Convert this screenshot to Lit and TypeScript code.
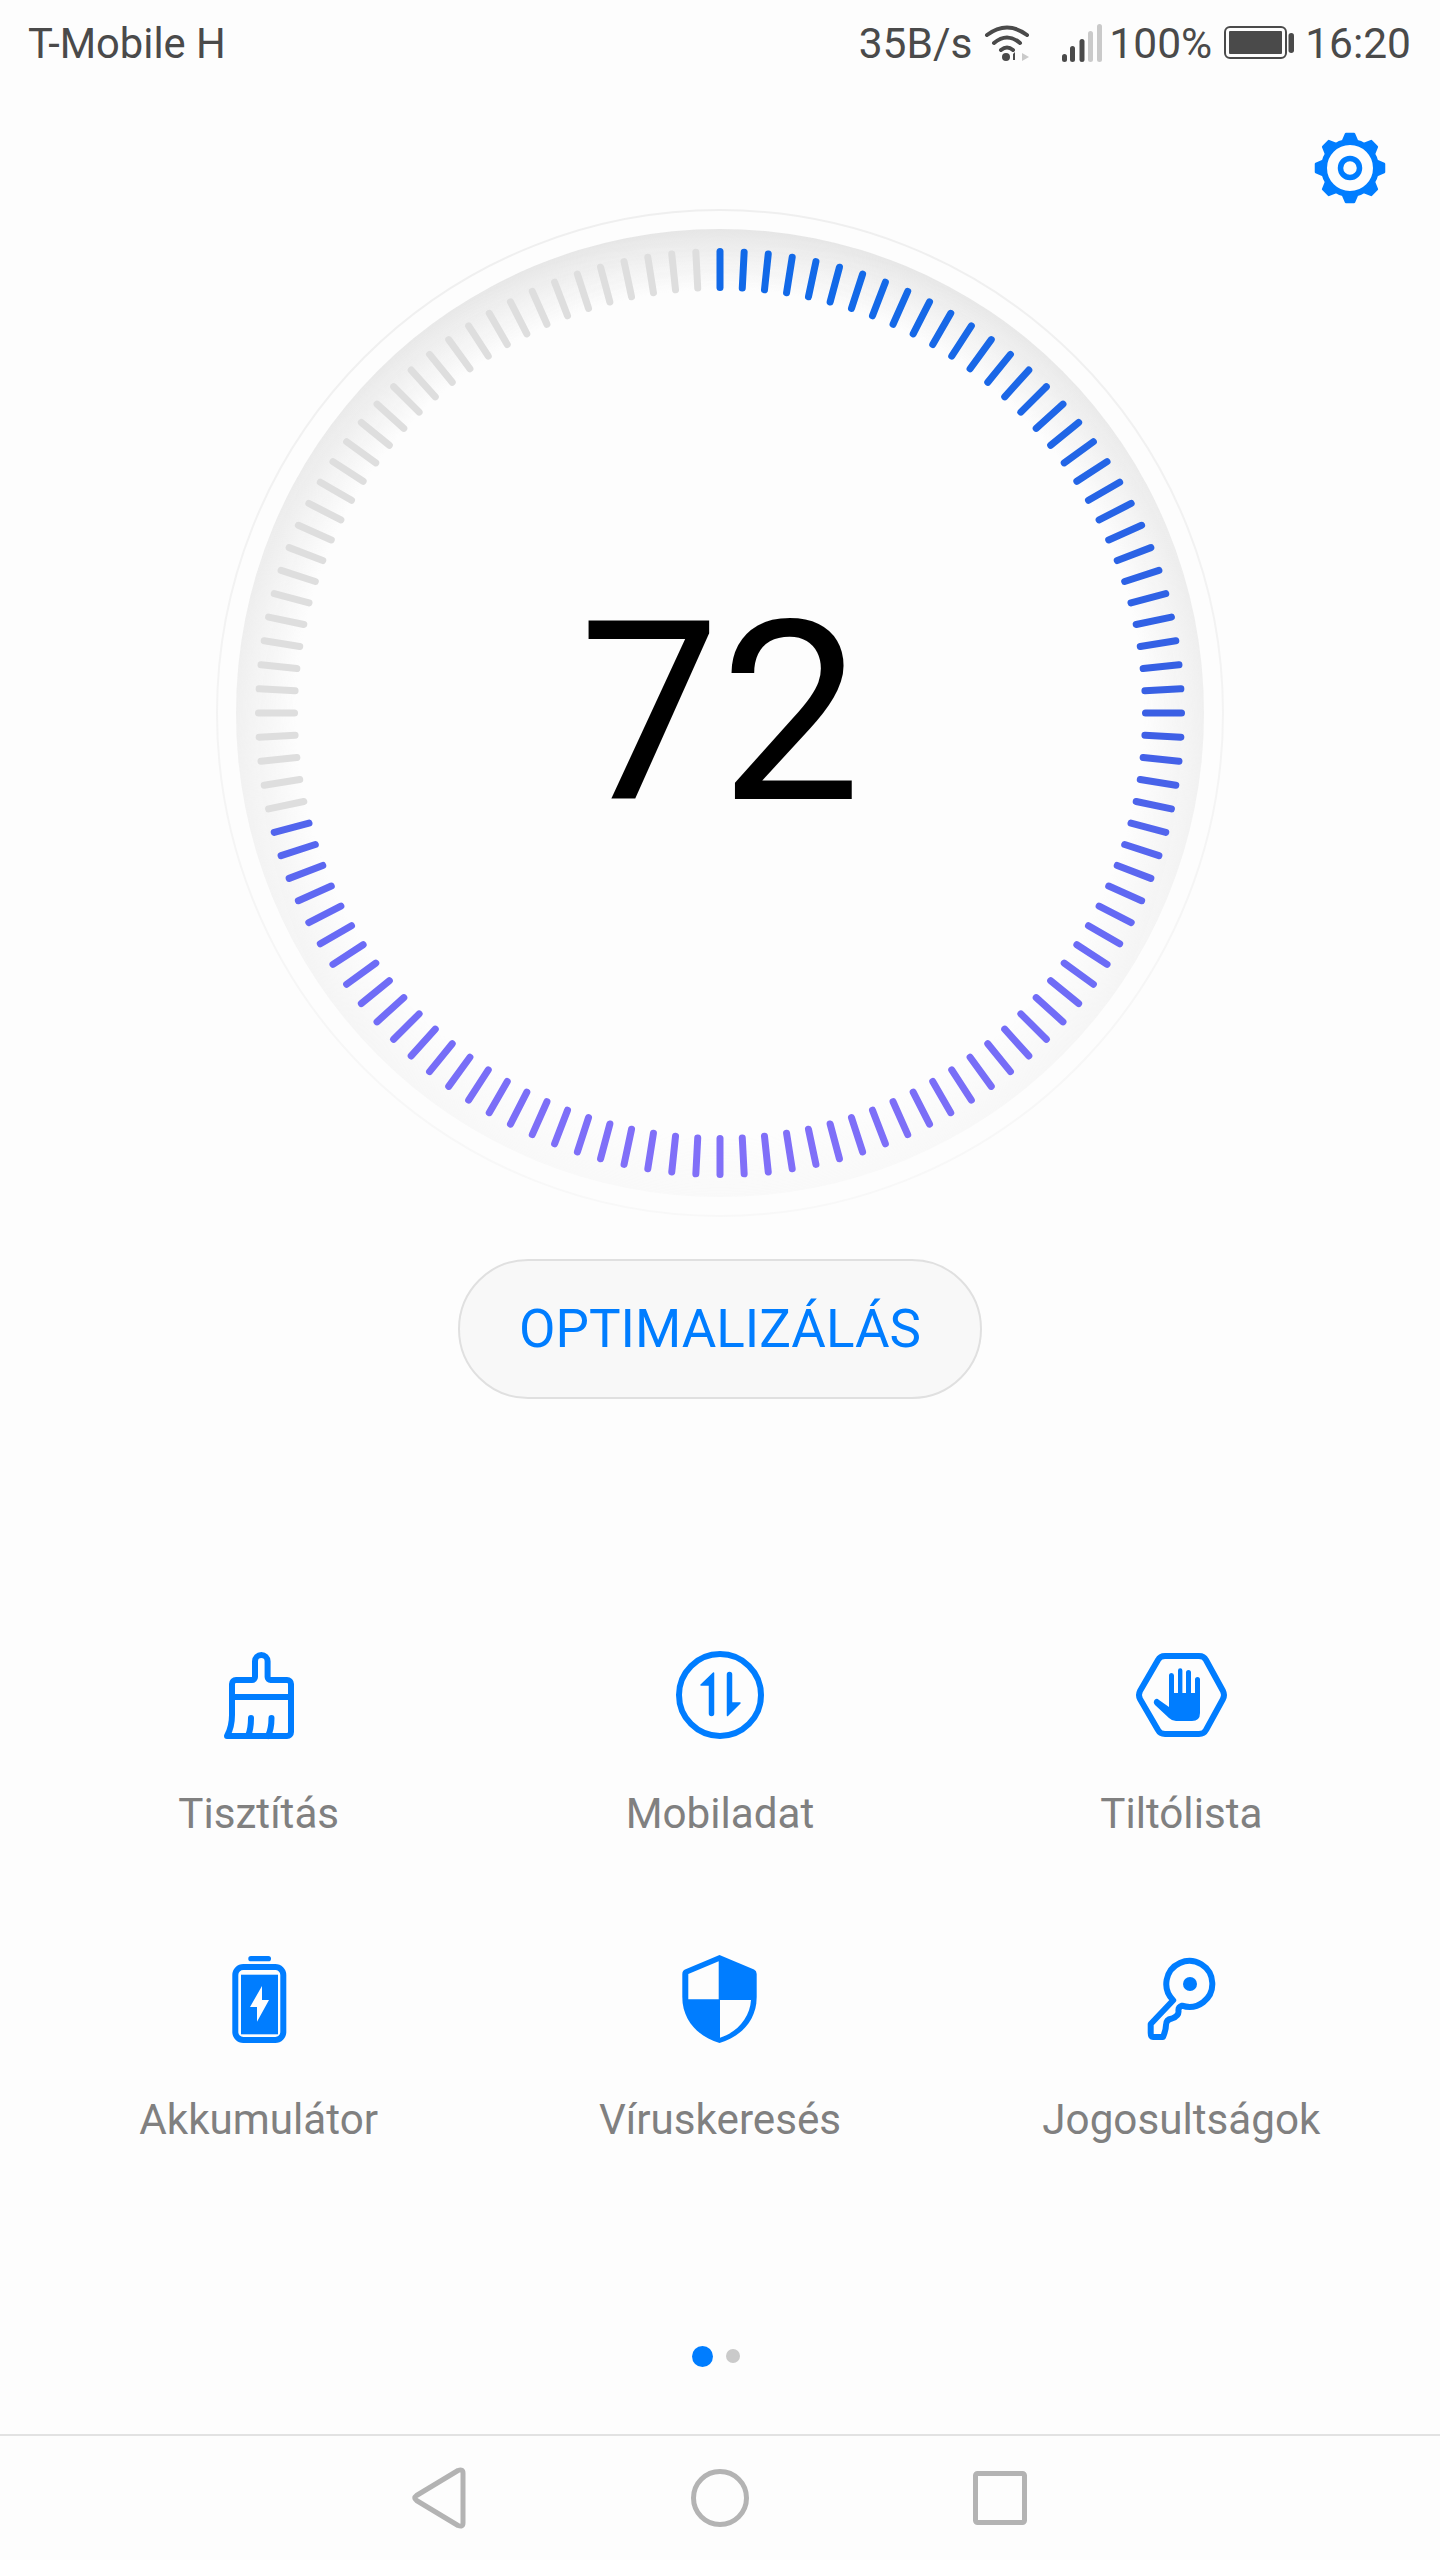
import { LitElement, css, html, svg } from 'lit';
import { customElement } from 'lit/decorators.js';

const TICKS = 120;
const SCORE = 72;

// vertical colour ramp of the score ticks
const RAMP: [number, number[]][] = [
  [0, [15, 106, 232]],
  [0.5, [58, 95, 228]],
  [0.75, [106, 107, 246]],
  [1, [131, 112, 248]],
];

function tickColor(t: number) {
  for (let i = 1; i < RAMP.length; i++) {
    const [p0, c0] = RAMP[i - 1];
    const [p1, c1] = RAMP[i];
    if (t <= p1) {
      const k = (t - p0) / (p1 - p0);
      return `rgb(${c0.map((v, j) => Math.round(v + (c1[j] - v) * k)).join(',')})`;
    }
  }
  return '#8370f8';
}

const ICONS = {
  brush: svg`<path class="line" d="M21 50V37a4 4 0 0 1 4-4H41a3 3 0 0 0 3-3V14.3a6.3 6.3 0 0 1 12.6 0V30a3 3 0 0 0 3 3H76a4 4 0 0 1 4 4V85a4 4 0 0 1-4 4H16Q21 80 21 68V50H80M40 71Q40 82 37 89M60.5 71Q60.5 82 57 89"/>`,
  data: svg`<circle class="line" cx="48" cy="48" r="41"/><path class="soft" d="M41.500 26V66.500a2 2 0 0 1-4 0V38H29ZM55.500 27.500a2 2 0 0 1 4 0V56H68L55.500 68.500Z"/>`,
  block: svg`<path class="line" d="M7 44 25 13Q27 9 32 9H66Q71 9 73 13L90 44Q92 48 90 52L73 83Q71 87 66 87H32Q27 87 25 83L7 52Q5 48 7 44Z"/><path class="solid" d="M36 28.500a2.500 2.500 0 0 1 5 0V46H45V23.500a2.200 2.200 0 0 1 4.400 0V46H53V25.500a2.500 2.500 0 0 1 5 0V46H62V32.500a2.500 2.500 0 0 1 5 0V66Q67 74 59 74H43Q39 74 36 71L22 58Q19.500 55 22 52.500Q24 51 26 53L36 60Z"/>`,
  battery: svg`<rect class="solid" x="37.300" y="3" width="22.700" height="5.300" rx="2.600"/><rect class="line" x="24.300" y="14" width="48" height="73" rx="8"/><rect class="solid" x="30" y="21.700" width="37" height="59.600"/><path class="cut" d="M51 33 39 54H46V68.700L58 47H51Z"/>`,
  shield: svg`<path class="solid" d="M47.500 2 82 16.500Q84.700 17.700 84.700 21V44C84.700 68 68 84 47.500 90 27 84 10.300 68 10.300 44V21Q10.300 17.700 13 16.500Z"/><path class="cut" d="M16.300 21 46.700 8.300V46.300H16.300ZM48 47H79C78 64 66 79 48 84.700Z"/>`,
  key: svg`<path class="line" d="M40.200 47.300A23 23 0 1 1 49 52.700Q45 54 45.500 58Q46 63 39 65.500Q33 66.500 33 72Q33 77 30 84H20Q17.700 84 17.700 80V71Z"/><circle class="solid" cx="57" cy="31" r="7"/>`,
};

const TOOLS = [
  { icon: ICONS.brush, label: 'Tisztítás' },
  { icon: ICONS.data, label: 'Mobiladat' },
  { icon: ICONS.block, label: 'Tiltólista' },
  { icon: ICONS.battery, label: 'Akkumulátor' },
  { icon: ICONS.shield, label: 'Víruskeresés' },
  { icon: ICONS.key, label: 'Jogosultságok' },
];

// signal strength bars: x, height, colour
const BARS: [number, number, string][] = [
  [0, 8, '#4a4a4a'],
  [8, 16, '#4a4a4a'],
  [17.5, 23, '#4a4a4a'],
  [26, 31, '#cacaca'],
  [35, 38, '#cacaca'],
];

@customElement('app-root')
export class AppRoot extends LitElement {
  static styles = css`
    :host {
      display: flex;
      flex-direction: column;
      width: 1440px;
      height: 2560px;
      background: #fdfdfd;
      font-family: Roboto, "Liberation Sans", sans-serif;
      overflow: hidden;
    }

    svg { display: block; }

    .status {
      height: 84px;
      box-sizing: border-box;
      padding: 2px 29px 0 28px;
      display: flex;
      align-items: center;
      color: #4a4a4a;
      font-size: 42.500px;
    }
    .carrier { margin-right: auto; font-size: 41.700px; }
    .speed { margin-right: 12px; }
    .wifi { margin-right: 32px; }
    .bars { margin-right: 6px; }
    .percent { margin-right: 12px; }
    .cell { margin-right: 11px; }

    .toolbar {
      height: 124px;
      padding: 44px 50px 0 0;
      box-sizing: border-box;
      display: flex;
      justify-content: flex-end;
    }

    .gauge {
      position: relative;
      width: 1010px;
      height: 1010px;
      align-self: center;
    }
    .score {
      position: absolute;
      inset: 0;
      display: flex;
      align-items: center;
      justify-content: center;
      font-size: 251px;
      font-weight: 400;
      color: #000;
    }

    .optimize {
      align-self: center;
      margin-top: 41px;
      width: 524px;
      height: 140px;
      box-sizing: border-box;
      border: 2px solid #e0e0e0;
      border-radius: 70px;
      background: #f8f8f8;
      color: #007dff;
      font: inherit;
      font-size: 53px;
      padding: 0;
    }

    .tools {
      margin: 248px 28px 0;
      display: grid;
      grid-template-columns: repeat(3, 1fr);
      row-gap: 115px;
    }
    .tool {
      display: flex;
      flex-direction: column;
      align-items: center;
      gap: 47px;
      color: #808080;
      font-size: 42.200px;
      line-height: 48px;
    }
    .icon { width: 96px; height: 96px; }
    .line { fill: none; stroke: #007dff; stroke-width: 6; stroke-linecap: round; stroke-linejoin: round; }
    .solid { fill: #007dff; }
    .soft { fill: #007dff; stroke: #007dff; stroke-width: 1.500; stroke-linejoin: round; }
    .cut { fill: #fdfdfd; }

    .dots {
      margin-top: 201px;
      height: 22px;
      display: flex;
      align-items: center;
      justify-content: center;
      gap: 13px;
      padding-right: 8px;
    }
    .dot { width: 21px; height: 21px; border-radius: 50%; background: #007dff; }
    .dot.off { width: 14px; height: 14px; background: #cacaca; }

    .nav {
      margin-top: auto;
      height: 126px;
      box-sizing: border-box;
      border-top: 2px solid #e2e2e2;
      display: flex;
      align-items: center;
      justify-content: center;
      gap: 200px;
    }
    .nav path, .nav circle, .nav rect { fill: none; stroke: #b3b3b3; stroke-width: 5; stroke-linejoin: round; }
  `;

  private renderGauge() {
    const filled = Math.round((SCORE / 100) * TICKS);
    const ticks = [];
    for (let i = 0; i < TICKS; i++) {
      const a = (i / TICKS) * Math.PI * 2;
      const s = Math.sin(a);
      const c = -Math.cos(a);
      const color = i < filled ? tickColor((c * 443 + 465) / 930) : '#dedede';
      ticks.push(svg`<line x1=${s * 425.5} y1=${c * 425.5} x2=${s * 461.5} y2=${c * 461.5}
        stroke=${color} stroke-width="7" stroke-linecap="round"/>`);
    }
    return html`
      <svg width="1010" height="1010" viewBox="-505 -505 1010 1010">
        <defs>
          <radialGradient id="band" gradientUnits="userSpaceOnUse" cx="0" cy="0" r="484">
            <stop offset="0.875" stop-color="#e6e6e6" stop-opacity="0"/>
            <stop offset="1" stop-color="#e6e6e6"/>
          </radialGradient>
          <linearGradient id="fade" gradientUnits="userSpaceOnUse" x1="0" y1="-484" x2="0" y2="484">
            <stop offset="0" stop-color="#fff"/>
            <stop offset="0.45" stop-color="#fff" stop-opacity="0.6"/>
            <stop offset="1" stop-color="#fff" stop-opacity="0.15"/>
          </linearGradient>
          <linearGradient id="rim" gradientUnits="userSpaceOnUse" x1="0" y1="-503" x2="0" y2="503">
            <stop offset="0" stop-color="#efefef"/>
            <stop offset="1" stop-color="#f8f8f8"/>
          </linearGradient>
          <mask id="bandMask" maskUnits="userSpaceOnUse" x="-505" y="-505" width="1010" height="1010">
            <rect x="-505" y="-505" width="1010" height="1010" fill="url(#fade)"/>
          </mask>
        </defs>
        <circle r="503" fill="none" stroke="url(#rim)" stroke-width="2"/>
        <circle r="484" fill="url(#band)" mask="url(#bandMask)"/>
        ${ticks}
      </svg>
    `;
  }

  render() {
    return html`
      <div class="status">
        <span class="carrier">T-Mobile H</span>
        <span class="speed">35B/s</span>
        <svg class="wifi" width="46" height="38" viewBox="0 0 46 38">
          <path d="M3 11Q23 -4 43 11M10 19Q23 8 36 19M17 26Q23 21 29 26" fill="none" stroke="#4a4a4a" stroke-width="4" stroke-linecap="round"/>
          <circle cx="22" cy="33" r="4" fill="#4a4a4a"/>
          <path d="M31 28V36H29V30Z" fill="#4a4a4a"/>
          <path d="M38 29 45 33 38 37Z" fill="#cacaca"/>
        </svg>
        <svg class="bars" width="41" height="38" viewBox="0 0 41 38">
          ${BARS.map(
            ([x, h, color]) => svg`<rect x=${x} y=${38 - h} width="5" height=${h} rx="2.500" fill=${color}/>`,
          )}
        </svg>
        <span class="percent">100%</span>
        <svg class="cell" width="70" height="34" viewBox="0 0 70 34">
          <rect x="1" y="1" width="61" height="31" rx="5" fill="none" stroke="#4a4a4a" stroke-width="2"/>
          <rect x="5" y="5" width="53" height="23" rx="1" fill="#4a4a4a"/>
          <rect x="64.500" y="7" width="5.500" height="20" rx="2.700" fill="#4a4a4a"/>
        </svg>
        <span>16:20</span>
      </div>

      <div class="toolbar">
        <svg width="80" height="80" viewBox="-40 -40 80 80">
          <circle r="26" fill="none" stroke="#007dff" stroke-width="6"/>
          <circle r="9.500" fill="none" stroke="#007dff" stroke-width="5.500"/>
          ${[0, 45, 90, 135, 180, 225, 270, 315].map(
            (r) => svg`<path d="M-7 -27 -4 -34H4L7 -27Z" transform="rotate(${r})" fill="#007dff" stroke="#007dff" stroke-width="2.500" stroke-linejoin="round"/>`,
          )}
        </svg>
      </div>

      <div class="gauge">
        ${this.renderGauge()}
        <div class="score">${SCORE}</div>
      </div>

      <button class="optimize">OPTIMALIZÁLÁS</button>

      <div class="tools">
        ${TOOLS.map(
          (t) => html`
            <div class="tool">
              <svg class="icon" viewBox="0 0 96 96">${t.icon}</svg>
              <span>${t.label}</span>
            </div>
          `,
        )}
      </div>

      <div class="dots">
        <span class="dot"></span>
        <span class="dot off"></span>
      </div>

      <div class="nav">
        <svg width="80" height="80" viewBox="0 0 80 80">
          <path d="M16.500 37.500 58 12.500Q63 10.500 63 15V65Q63 69.500 58 67.500L16.500 42.500Q13 40 16.500 37.500Z"/>
        </svg>
        <svg width="80" height="80" viewBox="0 0 80 80"><circle cx="40" cy="40" r="26.500"/></svg>
        <svg width="80" height="80" viewBox="0 0 80 80"><rect x="15.500" y="15.500" width="49" height="49" rx="2"/></svg>
      </div>
    `;
  }
}
